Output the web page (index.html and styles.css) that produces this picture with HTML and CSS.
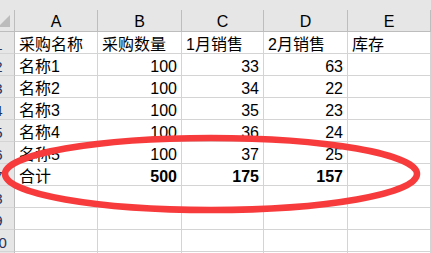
FILE: index.html
```html
<!DOCTYPE html>
<html lang="zh-CN">
<head>
  <meta charset="UTF-8" />
  <meta name="viewport" content="width=device-width, initial-scale=1" />
  <title>采购统计</title>
  <link rel="stylesheet" href="styles.css">
</head>
<body>

<div class="sheet">
  <!-- bottom edge of the formula bar -->
  <div class="bar-edge"></div>

  <table class="grid">
    <colgroup>
      <col class="col-rowhead">
      <col class="col-a">
      <col class="col-b">
      <col class="col-c">
      <col class="col-d">
      <col class="col-e">
      <col class="col-f">
    </colgroup>
    <thead>
      <tr>
        <th class="corner"></th>
        <th>A</th>
        <th>B</th>
        <th>C</th>
        <th>D</th>
        <th>E</th>
        <th></th>
      </tr>
    </thead>
    <tbody>
      <tr>
        <th class="rownum">1</th>
        <td>采购名称</td>
        <td>采购数量</td>
        <td>1月销售</td>
        <td>2月销售</td>
        <td>库存</td>
        <td></td>
      </tr>
      <tr>
        <th class="rownum">2</th>
        <td>名称1</td>
        <td class="num">100</td>
        <td class="num">33</td>
        <td class="num">63</td>
        <td></td>
        <td></td>
      </tr>
      <tr>
        <th class="rownum">3</th>
        <td>名称2</td>
        <td class="num">100</td>
        <td class="num">34</td>
        <td class="num">22</td>
        <td></td>
        <td></td>
      </tr>
      <tr>
        <th class="rownum">4</th>
        <td>名称3</td>
        <td class="num">100</td>
        <td class="num">35</td>
        <td class="num">23</td>
        <td></td>
        <td></td>
      </tr>
      <tr>
        <th class="rownum">5</th>
        <td>名称4</td>
        <td class="num">100</td>
        <td class="num">36</td>
        <td class="num">24</td>
        <td></td>
        <td></td>
      </tr>
      <tr>
        <th class="rownum">6</th>
        <td>名称5</td>
        <td class="num">100</td>
        <td class="num">37</td>
        <td class="num">25</td>
        <td></td>
        <td></td>
      </tr>
      <tr class="total">
        <th class="rownum">7</th>
        <td>合计</td>
        <td class="num">500</td>
        <td class="num">175</td>
        <td class="num">157</td>
        <td></td>
        <td></td>
      </tr>
      <tr>
        <th class="rownum">8</th>
        <td></td><td></td><td></td><td></td><td></td><td></td>
      </tr>
      <tr>
        <th class="rownum">9</th>
        <td></td><td></td><td></td><td></td><td></td><td></td>
      </tr>
      <tr>
        <th class="rownum">10</th>
        <td></td><td></td><td></td><td></td><td></td><td></td>
      </tr>
      <tr>
        <th class="rownum">11</th>
        <td></td><td></td><td></td><td></td><td></td><td></td>
      </tr>
    </tbody>
  </table>

  <!-- hand-drawn red circle around the totals -->
  <svg class="mark" width="431" height="253" viewBox="0 0 431 253">
    <ellipse cx="211" cy="174" rx="206" ry="36" fill="none" stroke="#f73b3d" stroke-width="6.5" />
  </svg>
</div>

</body>
</html>
```

FILE: styles.css
```css
:root {
  --head-bg: #e6e6e6;
  --head-line: #bdbdbd;
  --grid-line: #d4d4d4;
  --rownum: #243462;
}

* {
  box-sizing: border-box;
}

body {
  margin: 0;
  background: #ffffff;
  overflow: hidden;
  font-family: "Liberation Sans", "Noto Sans CJK SC", sans-serif;
  color: #000000;
}

.sheet {
  position: relative;
  width: 431px;
  height: 253px;
  overflow: hidden;
}

.bar-edge {
  height: 10px;
  background: var(--head-bg);
}

.grid {
  table-layout: fixed;
  border-collapse: separate;
  border-spacing: 0;
  width: 508px;
  margin-left: -17px;
  font-size: 16px;
}

.col-rowhead { width: 32px; }
.col-a { width: 83px; }
.col-b { width: 84px; }
.col-c { width: 82px; }
.col-d { width: 84px; }
.col-e { width: 83px; }
.col-f { width: 60px; }

.grid tr {
  height: 22px;
}

.grid th,
.grid td {
  padding: 0 4px;
  line-height: 16px;
  vertical-align: bottom;
  white-space: nowrap;
  overflow: hidden;
  border-right: 1px solid var(--grid-line);
  border-bottom: 1px solid var(--grid-line);
  text-align: left;
}

.grid thead th {
  background: var(--head-bg);
  font-weight: normal;
  text-align: center;
  padding-bottom: 1px;
  border-right-color: var(--head-line);
  border-bottom-color: var(--head-line);
}

.grid thead th.corner {
  position: relative;
}

/* little select-all triangle */
.grid thead th.corner::after {
  content: "";
  position: absolute;
  right: 4px;
  bottom: 4px;
  border-style: solid;
  border-width: 0 0 12px 12px;
  border-color: transparent transparent #bcbcbc transparent;
}

.grid .rownum {
  background: var(--head-bg);
  font-weight: normal;
  font-size: 15px;
  text-align: center;
  color: var(--rownum);
  border-right-color: var(--head-line);
}

.grid td.num {
  text-align: right;
}

.grid .total td.num {
  font-weight: bold;
}

.mark {
  position: absolute;
  top: 0;
  left: 0;
  pointer-events: none;
}
```
